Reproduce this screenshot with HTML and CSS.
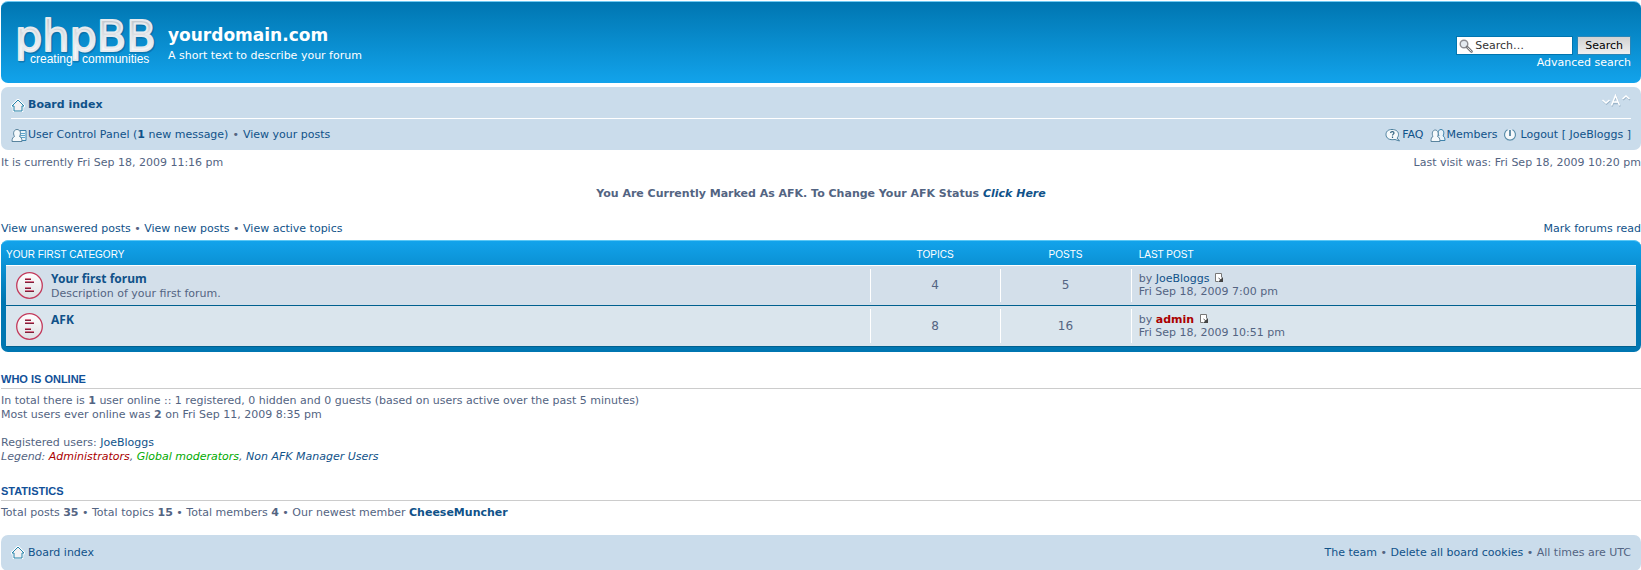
FILE: index.html
```html
<!DOCTYPE html>
<html lang="en">
<head>
<meta charset="utf-8">
<title>yourdomain.com - Index page</title>
<link rel="stylesheet" href="styles.css">
</head>
<body>
<svg class="defs" width="0" height="0" aria-hidden="true">
  <defs>
    <linearGradient id="silver" x1="0" y1="0" x2="0" y2="1"><stop offset="0.2" stop-color="#c4c9ce"/><stop offset="0.75" stop-color="#f4f6f8"/></linearGradient>
    <linearGradient id="disc" x1="0" y1="0" x2="0" y2="1"><stop offset="0" stop-color="#fff"/><stop offset="1" stop-color="#dcdfe3"/></linearGradient>
    <symbol id="home" viewBox="0 0 14 13"><path d="M7 1 1 7h2v5h8V7h2z" fill="#f3f1f3" stroke="#fff" stroke-width="2.6"/><path d="M7 1 1 7h2v5h8V7h2z" fill="#f3f1f3" stroke="#2382aa"/></symbol>
    <symbol id="unread" viewBox="0 0 27 27"><circle cx="13.500" cy="13.500" r="12.800" fill="url(#disc)" stroke="#c33a5c" stroke-width="1.300"/><path d="M9 6.500h6M9 9.500h9M9 15.500h6M9 18.500h9" stroke="#d23a60" stroke-opacity="0.700"/><path d="M9 7.500h6M9 10.500h9M9 16.500h6M9 19.500h9" stroke="#7c2138"/></symbol>
    <symbol id="latest" viewBox="0 0 10 10"><path d="M.5.500h6v8h-6z" fill="#fff" stroke="#777"/><path d="M3 9V5l1.500 1.500L7 4v5z" fill="#fff"/><path d="m8 4v5H3z" fill="#444"/><path d="m3.500 5 2.500 2" stroke="#555"/></symbol>
  </defs>
</svg>
<div class="wrap">
  <header class="headerbar">
    <a class="logo" href="#" aria-label="phpBB creating communities">
      <svg width="142" height="54" viewBox="0 0 142 54">
        <text x="-1" y="36" class="logo-name logo-shadow" aria-hidden="true">phpBB</text>
        <text x="-2" y="35" class="logo-name logo-face">phpBB</text>
        <text x="13" y="47" class="logo-tag">creating</text>
        <text x="65" y="47" class="logo-tag">communities</text>
      </svg>
    </a>
    <div class="site">
      <h1>yourdomain.com</h1>
      <p>A short text to describe your forum</p>
    </div>
    <form class="search" role="search">
      <div class="search-row">
        <span class="field">
          <svg width="14" height="14" viewBox="0 0 14 14"><circle cx="5" cy="5" r="3.800" fill="#e4eaf0" stroke="#8d8d92" stroke-width="1.400"/><path d="m8 8 4.500 4.500" stroke="#77777b" stroke-width="2.600" stroke-linecap="round"/><path d="m8.500 8.500 4 4" stroke="#ddd" stroke-width="1"/></svg>
          <input type="text" aria-label="Search" value="Search…">
        </span>
        <button type="button">Search</button>
      </div>
      <a href="#">Advanced search</a>
    </form>
  </header>

  <nav class="navbar">
    <div class="bar crumbs">
      <a class="icon-link" href="#"><svg width="14" height="13"><use href="#home"/></svg><strong>Board index</strong></a>
      <a class="fontsize" href="#" aria-label="Change font size">
        <svg width="30" height="14" viewBox="0 0 30 14" fill="none">
          <g stroke="#9bb4c9" stroke-width="1.600"><path d="m2 7 3.500 3L9 7M22 6l3.500-3L29 6"/><path d="m11 12.500 4-10 4 10M12.500 9.500h5"/></g>
          <g stroke="#fff" stroke-width="1.500"><path d="m1.500 6 3.500 3 3.500-3M21.500 5 25 2l3.500 3"/><path d="m10.500 11.500 4-10 4 10M12 8h5"/></g>
        </svg>
      </a>
    </div>
    <div class="bar links">
      <div class="left">
        <a class="icon-link tight" href="#"><svg width="16" height="15" viewBox="0 0 16 15"><path d="M9 2.500h6v10H9z" fill="#e9f3f9" stroke="#3e83ac"/><path d="M10 5.500h4M10 7.500h4M10 9.500h4" stroke="#5da6cc"/><path d="M1 13.500c0-3 1-4.500 2.500-5C1.500 5 3 1.500 6 1.500S10.500 5 8.500 8.500c1.500.5 2.500 2 2.500 5z" fill="#f5f9fb" stroke="#5a849e"/></svg><span>User Control Panel (<strong>1</strong> new message)</span></a>
        <span>•</span>
        <a href="#">View your posts</a>
      </div>
      <div class="right">
        <a class="icon-link tight" href="#"><svg width="16" height="15" viewBox="0 0 16 15"><path d="M7 1.500c4 0 6.500 2 6.500 5 0 1.500-.5 2.500-1.500 3.500l2.500 3-4.500-1.500C4 12.500 1 10 1 6.500c0-3 2-5 6-5z" fill="#f5f9fb" stroke="#4a7f9d"/><path d="M5.500 5c.5-2 3.500-1.500 3.500 0 0 1-1.500 1.300-1.500 2.500M7.500 8.500V10" fill="none" stroke="#336482" stroke-width="1.200"/></svg>FAQ</a>
        <a class="icon-link tight" href="#"><svg width="16" height="15" viewBox="0 0 16 15"><path d="M7 12.500h8c0-2-.5-4-2-4.500 1.500-2.500 1-6.500-2-6.500S7.500 5 9 8" fill="#e9f3f9" stroke="#3e83ac"/><path d="M1 13.500c0-3 .5-4.500 2-5C1.500 5.500 2.500 2 5.200 2S9 5.500 7.500 8.500c1.500.5 2.500 2 2.500 5z" fill="#f5f9fb" stroke="#5a849e"/></svg>Members</a>
        <a class="icon-link" href="#"><svg width="14" height="14" viewBox="0 0 14 14"><circle cx="7" cy="7" r="5.500" fill="#f5f9fb"/><path d="M4.500 1.800A5.500 5.500 0 1 0 9.500 1.800" fill="none" stroke="#5c8fab" stroke-width="1.200"/><path d="M7 2v6" stroke="#3f7595" stroke-width="1.600"/></svg>Logout [ JoeBloggs ]</a>
      </div>
    </div>
  </nav>

  <main>
    <div class="times"><span>It is currently Fri Sep 18, 2009 11:16 pm</span><span>Last visit was: Fri Sep 18, 2009 10:20 pm</span></div>
    <p class="afk">You Are Currently Marked As AFK. To Change Your AFK Status <a href="#"><em>Click Here</em></a></p>
    <div class="actions">
      <span><a href="#">View unanswered posts</a> • <a href="#">View new posts</a> • <a href="#">View active topics</a></span>
      <a href="#">Mark forums read</a>
    </div>

    <section class="forabg">
      <table>
        <colgroup><col><col class="num"><col class="num"><col class="last"></colgroup>
        <thead><tr><th scope="col">YOUR FIRST CATEGORY</th><th scope="col">TOPICS</th><th scope="col">POSTS</th><th scope="col">LAST POST</th></tr></thead>
        <tbody>
          <tr>
            <td><div class="forum"><svg width="27" height="27"><use href="#unread"/></svg><div><a class="forumtitle" href="#">Your first forum</a><p>Description of your first forum.</p></div></div></td>
            <td>4</td><td>5</td>
            <td>by <a href="#">JoeBloggs</a> <a href="#" aria-label="View the latest post"><svg class="latest" width="10" height="10"><use href="#latest"/></svg></a><br>Fri Sep 18, 2009 7:00 pm</td>
          </tr>
          <tr>
            <td><div class="forum"><svg width="27" height="27"><use href="#unread"/></svg><div><a class="forumtitle" href="#">AFK</a></div></div></td>
            <td>8</td><td>16</td>
            <td>by <a class="admin" href="#"><strong>admin</strong></a> <a href="#" aria-label="View the latest post"><svg class="latest" width="10" height="10"><use href="#latest"/></svg></a><br>Fri Sep 18, 2009 10:51 pm</td>
          </tr>
        </tbody>
      </table>
    </section>

    <section class="info">
      <h3>WHO IS ONLINE</h3>
      <p>In total there is <strong>1</strong> user online :: 1 registered, 0 hidden and 0 guests (based on users active over the past 5 minutes)<br>Most users ever online was <strong>2</strong> on Fri Sep 11, 2009 8:35 pm<br><br>Registered users: <a href="#">JoeBloggs</a><br><em>Legend: <a class="admin" href="#">Administrators</a>, <a class="mod" href="#">Global moderators</a>, <a href="#">Non AFK Manager Users</a></em></p>
    </section>
    <section class="info">
      <h3>STATISTICS</h3>
      <p>Total posts <strong>35</strong> • Total topics <strong>15</strong> • Total members <strong>4</strong> • Our newest member <a href="#"><strong>CheeseMuncher</strong></a></p>
    </section>
  </main>

  <footer class="navbar footer">
    <a class="icon-link" href="#"><svg width="14" height="13"><use href="#home"/></svg>Board index</a>
    <span><a href="#">The team</a> • <a href="#">Delete all board cookies</a> • All times are UTC</span>
  </footer>
</div>
</body>
</html>
```

FILE: styles.css
```css
* { box-sizing: border-box; }
body, h1, h3, p { margin: 0; }
body {
  background: #fff;
  color: #536482;
  font: 11px/14px Verdana, "DejaVu Sans", sans-serif;
}
a { color: #105289; text-decoration: none; }
a:hover { text-decoration: underline; }
svg { flex: none; }
.defs { position: absolute; }
.wrap { padding: 1px 0 0 1px; }

.headerbar {
  display: flex;
  align-items: flex-start;
  min-height: 82px;
  padding: 14px 10px 0 16px;
  border-top: 1px solid #6fcaf3;
  border-radius: 7px;
  background: linear-gradient(#0076b1, #12a3eb);
  color: #fff;
}
.headerbar a { color: #fff; }
.logo { display: block; }
.logo svg { display: block; overflow: visible; }
.logo-name { font: 43px "DejaVu Sans", Verdana, sans-serif; stroke-linejoin: round; }
.logo-face { fill: url(#silver); stroke: #e6eaee; stroke-width: 2px; }
.logo-shadow { fill: #0a5f91; stroke: #0a5f91; stroke-width: 3px; opacity: 0.5; }
.logo-tag { font: 12px "Liberation Sans", Arial, sans-serif; fill: #fff; }
.site { flex: 1; padding: 7px 0 0 9px; }
h1 { font: bold 17px/24px Verdana, "DejaVu Sans", sans-serif; }
.site p { padding-top: 2px; }
.search { padding-top: 20px; text-align: right; }
.search-row { display: flex; gap: 4px; margin-bottom: 1px; }
.field {
  display: flex;
  align-items: center;
  gap: 2px;
  width: 117px;
  height: 19px;
  padding-left: 2px;
  background: #fff;
  border: 1px solid #0075b0;
}
.field input {
  width: 90px;
  padding: 0;
  border: 0;
  outline: 0;
  background: transparent;
  color: #333;
  font: inherit;
}
.search button {
  height: 19px;
  padding: 0 7px;
  border: 1px solid #2a86b8;
  background: linear-gradient(#d2d2d2, #efefef);
  color: #000;
  font: inherit;
}

.navbar {
  margin-top: 4px;
  padding: 3px 10px;
  border-radius: 7px;
  background: #cadceb;
}
.bar { display: flex; justify-content: space-between; align-items: center; }
.crumbs { height: 29px; padding-top: 2px; border-bottom: 1px solid #fff; }
.links { height: 28px; padding-top: 4px; }
.left, .right { display: flex; align-items: center; gap: 4px; }
.right { gap: 6px; }
.icon-link { display: inline-flex; align-items: center; gap: 3px; white-space: pre; }
.tight { gap: 1px; }
.fontsize { align-self: flex-start; padding-top: 2px; }
.fontsize svg { display: block; }

.times, .actions { display: flex; justify-content: space-between; }
.times { padding-top: 6px; }
.afk { padding: 17px 0 21px; font-weight: bold; text-align: center; }

.forabg {
  margin-top: 4px;
  padding: 0 5px 5px;
  border-top: 1px solid #5cc8f5;
  border-radius: 7px;
  background: #0076b1 linear-gradient(#12a3eb, #0076b1) no-repeat 0 0 / 100% 60px;
}
table { width: 100%; border-collapse: collapse; table-layout: fixed; }
.num { width: 8%; }
.last { width: 31%; }
th {
  height: 24px;
  padding: 4px 0 0;
  color: #fff;
  font: 10px/12px "Liberation Sans", Arial, sans-serif;
  text-align: center;
}
th:first-child { text-align: left; }
th:last-child { padding-left: 8px; text-align: left; }
tbody tr { border-top: 1px solid #fff; border-bottom: 1px solid #00608f; background: #d3dfea; }
tbody tr:last-child { background: #dae5ed; }
td {
  height: 40px;
  padding: 0;
  background: linear-gradient(#fff, #fff) no-repeat 0 50% / 1px calc(100% - 6px);
  font-size: 12px;
  text-align: center;
}
tr:last-child td { height: 41px; }
td:first-child { background: none; font-size: 11px; text-align: left; }
td:last-child { padding-left: 8px; font-size: 11px; line-height: 13px; text-align: left; }
.forum { display: flex; align-items: flex-start; gap: 8px; height: 38px; padding: 6px 0 0 10px; }
.forum > div { line-height: 15px; }
.forumtitle { display: block; font: bold 12px/14px "Trebuchet MS", "Noto Sans", sans-serif; }
.latest { margin-left: 2px; vertical-align: -1px; }
.admin { color: #a00; }
.mod { color: #0a0; }

.info { padding-top: 20px; }
h3 {
  margin-bottom: 5px;
  padding-bottom: 2px;
  border-bottom: 1px solid #ccc;
  color: #115098;
  font: bold 11px/14px "Liberation Sans", Arial, sans-serif;
}
.footer {
  display: flex;
  justify-content: space-between;
  align-items: center;
  min-height: 36px;
  margin-top: 15px;
}
```
